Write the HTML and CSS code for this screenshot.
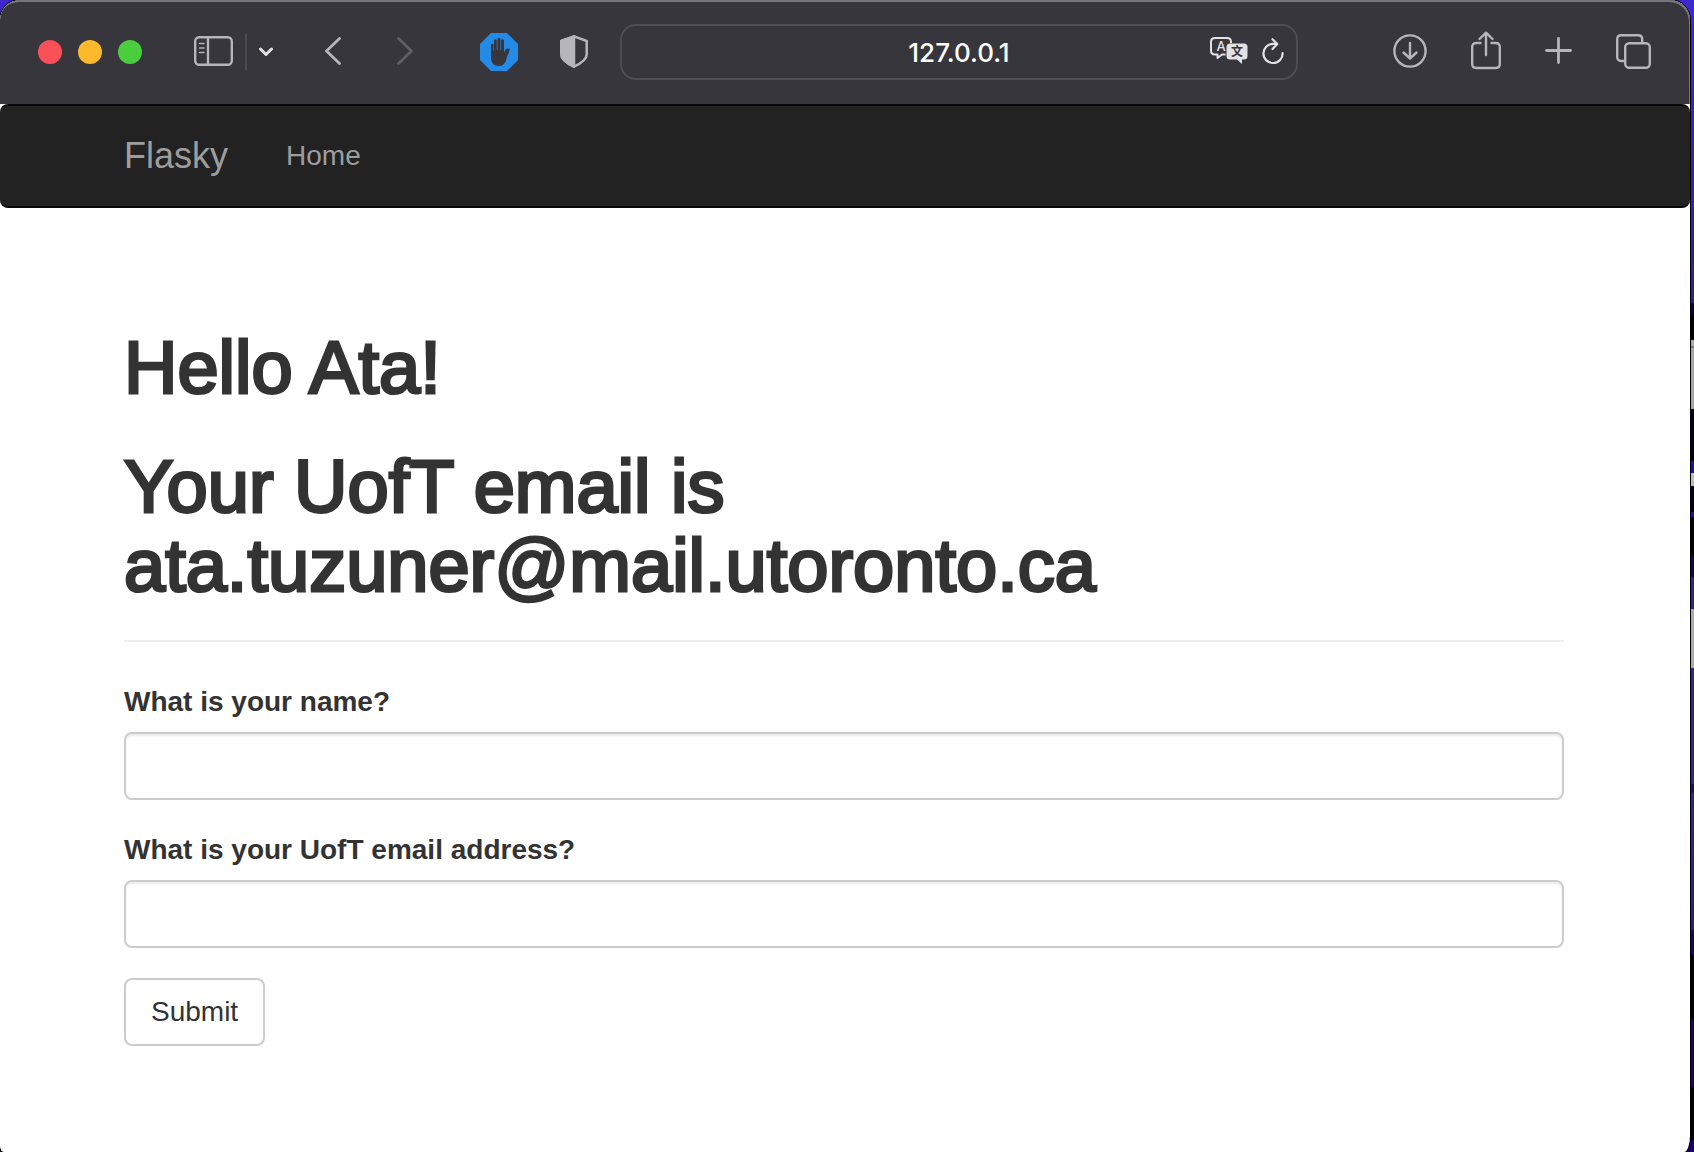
FILE: index.html
```html
<!DOCTYPE html>
<html lang="en">
<head>
<meta charset="utf-8">
<title>Flasky</title>
<link rel="stylesheet" href="styles.css">
</head>
<body>
<div class="window">
  <header class="toolbar">
    <div class="lights">
      <button class="light light-close" aria-label="Close"></button>
      <button class="light light-minimize" aria-label="Minimize"></button>
      <button class="light light-zoom" aria-label="Zoom"></button>
    </div>
    <div class="sidebar-tools">
      <button class="tool" aria-label="Show sidebar">
        <svg width="39" height="32" viewBox="0 0 39 32" fill="none" stroke="currentColor" stroke-width="2.400"><rect x="1.200" y="1.200" width="36.600" height="27.600" rx="4"/><path d="M14 1v28"/><path d="M5.500 7.500h4.500M5.500 12h4.500M5.500 16.500h4.500" stroke-width="1.500" stroke-linecap="round"/></svg>
      </button>
      <span class="divider"></span>
      <button class="tool tool-bright" aria-label="Tab groups">
        <svg width="14" height="10" viewBox="0 0 14 10" fill="none" stroke="currentColor" stroke-width="3" stroke-linecap="round" stroke-linejoin="round"><path d="M1.500 2l5.500 5.500L12.500 2"/></svg>
      </button>
    </div>
    <nav class="history" aria-label="History">
      <button class="tool" aria-label="Back">
        <svg width="16" height="30" viewBox="0 0 16 30" fill="none" stroke="currentColor" stroke-width="2.800" stroke-linecap="round" stroke-linejoin="round"><path d="M14.500 1.500L1.500 14l13 12.500"/></svg>
      </button>
      <button class="tool tool-dim" aria-label="Forward">
        <svg width="16" height="30" viewBox="0 0 16 30" fill="none" stroke="currentColor" stroke-width="2.800" stroke-linecap="round" stroke-linejoin="round"><path d="M1.500 1.500l13 12.500-13 12.500"/></svg>
      </button>
    </nav>
    <div class="extensions">
      <button class="tool" aria-label="Content blocker">
        <svg width="38" height="38" viewBox="0 0 38 38"><path d="M11 0h16l11 11v16L27 38H11L0 27V11z" fill="#238ae6"/><path d="M11 11.500q1.300-1.500 2.500 0V18h.5V7q1.300-1.500 2.800 0v10h.7V6q1.500-2 3 0v11h.6V7q1.400-1.500 2.900 0v12.500l1.500-2.800q1-2 4.500-.8l-3.500 9.500Q25 33 18.500 33T11 26z" fill="#37363c"/></svg>
      </button>
      <button class="tool" aria-label="Privacy report">
        <svg width="28" height="34" viewBox="0 0 28 34" fill="none" stroke="currentColor" stroke-width="2.500" stroke-linejoin="round"><path d="M14 1.300L26.700 6v13.500c0 5-5 8.500-12.700 12.200C6.300 28 1.300 24.500 1.300 19.500V6z"/><path d="M14 1.300L1.300 6v13.500c0 5 5 8.500 12.700 12.200z" fill="currentColor"/></svg>
      </button>
    </div>
    <div class="address">
      <input class="address-input" type="text" value="127.0.0.1" aria-label="Address">
      <div class="address-tools">
        <button class="tool tool-bright" aria-label="Translate">
          <svg width="38" height="30" viewBox="0 0 38 30"><path d="M15.500 17.500H12L7.500 21v-3.500H5q-4 0-4-4V5q0-4 4-4h12q4 0 4 4v1" fill="none" stroke="currentColor" stroke-width="2" stroke-linejoin="round"/><text x="11" y="13.500" class="glyph-latin" text-anchor="middle">A</text><path d="M20 6.500h14q3.500 0 3.500 3.500v9q0 3.500-3.500 3.500h-2V27l-5-4.500h-7q-3.500 0-3.500-3.500v-9q0-3.500 3.500-3.500z" fill="currentColor"/><text x="27" y="19" class="glyph-han" text-anchor="middle">文</text></svg>
        </button>
        <button class="tool tool-bright" aria-label="Reload">
          <svg width="22" height="28" viewBox="0 0 22 28" fill="none" stroke="currentColor" stroke-width="2.200" stroke-linecap="round" stroke-linejoin="round"><path d="M14 5.800H11A9.600 9.600 0 1 0 20.600 15"/><path d="M10.500 1.200l4.800 4.800L10.500 11"/></svg>
        </button>
      </div>
    </div>
    <div class="actions">
      <button class="tool" aria-label="Downloads">
        <svg width="34" height="36" viewBox="0 0 34 36" fill="none" stroke="currentColor" stroke-width="2.400" stroke-linecap="round" stroke-linejoin="round"><circle cx="17" cy="17" r="15.600"/><path d="M17 9v15.500M10.500 18.500l6.500 6 6.500-6"/></svg>
      </button>
      <button class="tool" aria-label="Share">
        <svg width="30" height="42" viewBox="0 0 30 42" fill="none" stroke="currentColor" stroke-width="2.400" stroke-linecap="round" stroke-linejoin="round"><path d="M9.500 12H5.200q-4 0-4 4v17q0 4 4 4h19.600q4 0 4-4V16q0-4-4-4h-4.300"/><path d="M15 24V2M8.500 8L15 1.700 21.500 8"/></svg>
      </button>
      <button class="tool" aria-label="New tab">
        <svg width="27" height="30" viewBox="0 0 27 30" fill="none" stroke="currentColor" stroke-width="2.800" stroke-linecap="round"><path d="M13.500 1.500v24M1.500 13.500h24"/></svg>
      </button>
      <button class="tool" aria-label="Tab overview">
        <svg width="35" height="37" viewBox="0 0 35 37" fill="none" stroke="currentColor" stroke-width="2.400"><path d="M9 27H5.200q-4 0-4-4V5.200q0-4 4-4h17q4 0 4 4V9"/><rect x="9.200" y="9.200" width="24.600" height="24.600" rx="4"/></svg>
      </button>
    </div>
  </header>
  <div class="page">
    <nav class="navbar">
      <a class="brand" href="#">Flasky</a>
      <a class="nav-link" href="#">Home</a>
    </nav>
    <main class="content">
      <div class="page-header">
        <h1>Hello Ata!</h1>
        <h1>Your UofT email is<br>ata.tuzuner@mail.utoronto.ca</h1>
      </div>
      <form class="form">
        <div class="field">
          <label for="name">What is your name?</label>
          <input class="control" id="name" type="text">
        </div>
        <div class="field">
          <label for="email">What is your UofT email address?</label>
          <input class="control" id="email" type="text">
        </div>
        <button class="submit" type="button">Submit</button>
      </form>
    </main>
  </div>
</div>
</body>
</html>
```
FILE: styles.css
```css
* { box-sizing: border-box; }

/* Desktop showing behind the window */
body {
  margin: 0;
  min-height: 100vh;
  padding-right: 4px;
  display: flex;
  font-family: "Liberation Sans", Arial, sans-serif;
  font-size: 28px;
  line-height: 40px;
  color: #333;
  background: linear-gradient(#3d28cc 0, #2c1d9a 303px, #0b0340 303px, #0b0340 315px, #000 315px, #000 340px, #a9a9a9 340px, #a9a9a9 346px, #777 346px, #777 348px, #a5a5a5 348px, #a5a5a5 409px, #03001c 409px, #03001c 461px, #22109a 461px, #22109a 473px, #bbb 473px, #bbb 486px, #03001c 486px, #03001c 512px, #22109a 512px, #22109a 517px, #000 517px, #000 555px, #14005c 555px, #14005c 577px, #2e209f 577px, #2e209f 609px, #aaa 609px, #aaa 668px, #2e209f 668px, #2e209f 784px, #1c0c70 784px, #1c0c70 793px, #2e209f 793px, #2a1990 930px, #19006c 930px, #19006c 955px, #000 955px, #000 1019px, #19006c 1019px, #19006c 1087px, #000 1087px, #000 1140px, #19006c 1140px);
}

.window {
  flex: 1;
  display: flex;
  flex-direction: column;
  overflow: hidden;
  background: #fff;
  border-radius: 20px 20px 6px 4px / 20px 20px 16px 6px;
  box-shadow: 0 0 0 1px #000;
}

.toolbar {
  height: 104px;
  padding: 0 39px 0 38px;
  display: flex;
  align-items: center;
  background: #37363c;
  border-radius: 20px 20px 0 0;
  box-shadow: inset -1px 2px 0 #77767b;
}

.lights { display: flex; gap: 16px; margin-right: 52px; }
.light { width: 24px; height: 24px; padding: 0; border: 0; border-radius: 50%; }
.light-close { background: #fc5058; }
.light-minimize { background: #fdb92c; }
.light-zoom { background: #4bce3e; }

.tool { padding: 0; border: 0; background: none; color: #b6b5ba; display: block; }
.tool svg { display: block; }
.tool-bright { color: #e2e2e4; }
.tool-dim { color: #5f5e64; }

.sidebar-tools { display: flex; align-items: center; gap: 12px; margin-right: 52px; }
.divider { width: 2px; height: 36px; background: #4a494f; }
.history { display: flex; gap: 56px; margin-right: 67px; }
.extensions { display: flex; align-items: center; gap: 42px; margin-right: 32px; }

.address { position: relative; flex: 1; margin-right: 95px; }
.address-input {
  display: block;
  width: 100%;
  height: 56px;
  padding: 0 90px;
  border: 2px solid #4e4d53;
  border-radius: 16px;
  background: transparent;
  color: #fff;
  font: 500 26px/40px Inter, sans-serif;
  text-align: center;
}
.address-tools {
  position: absolute;
  top: 0;
  right: 14px;
  height: 100%;
  display: flex;
  align-items: center;
  gap: 14px;
}
.glyph-latin { font: 500 13px Inter, sans-serif; fill: currentColor; }
.glyph-han { font: bold 12px "Noto Sans CJK SC", sans-serif; fill: #37363c; }

.actions { display: flex; align-items: center; gap: 44px; }

.navbar {
  height: 104px;
  padding: 0 124px;
  display: flex;
  align-items: center;
  gap: 58px;
  background: #222;
  border: solid #080808;
  border-width: 2px 0;
  border-radius: 8px;
}
.navbar a { color: #9d9d9d; text-decoration: none; }
.brand { font-size: 36px; }

.content { padding: 120px 126px 40px 124px; }

.page-header { padding-bottom: 35px; border-bottom: 2px solid #eee; }
h1 {
  margin: 0 0 40px;
  font-size: 74px;
  line-height: 79px;
  font-weight: 400;
  -webkit-text-stroke: 3px #333;
}
h1:last-child { margin-bottom: 0; }

.form { padding-top: 40px; }
.field { margin-bottom: 30px; }
label { display: block; margin-bottom: 10px; font-weight: 700; }
.control {
  display: block;
  width: 100%;
  height: 68px;
  padding: 12px 24px;
  border: 2px solid #ccc;
  border-radius: 8px;
  font: inherit;
  color: #555;
  background: #fff;
  box-shadow: inset 0 2px 2px rgba(0, 0, 0, 0.075);
}
.submit {
  height: 68px;
  padding: 0 25px;
  border: 2px solid #ccc;
  border-radius: 8px;
  background: #fff;
  color: #333;
  font: inherit;
}
```
